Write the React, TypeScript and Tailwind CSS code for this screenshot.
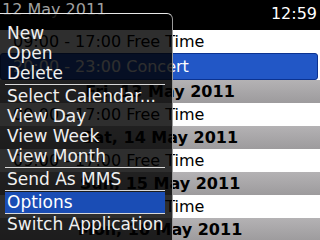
const menuGroups = [
  ['New', 'Open', 'Delete'],
  ['Select Calendar...', 'View Day', 'View Week', 'View Month'],
  ['Send As MMS'],
];

function DayHeader({ label }: { label: string }) {
  return (
    <div className="flex h-[23px] shrink-0 items-center justify-center bg-linear-to-b from-[#b4b2b4] to-[#9d9b9d] font-bold text-black">
      {label}
    </div>
  );
}

function FreeRow() {
  return (
    <div className="flex h-[23px] shrink-0 items-center bg-white pl-[13px] text-black">
      09:00 - 17:00 Free Time
    </div>
  );
}

function Separator({ className = '' }: { className?: string }) {
  return <div className={`mx-[5px] h-px w-[160px] bg-[#d8d8d8] ${className}`} />;
}

export default function App() {
  return (
    <div className="relative h-[240px] w-[320px] overflow-hidden bg-black font-['DejaVu_Sans',sans-serif] text-[16px] leading-[20px]">
      {/* calendar agenda */}
      <div className="flex h-full flex-col">
        <div className="flex h-[30px] shrink-0 items-start justify-between">
          <span className="pl-[2px] text-[#a0a0a0]">12 May 2011</span>
          <span className="pr-[3px] pt-[4px] text-white">12:59</span>
        </div>
        <FreeRow />
        <div className="flex h-[27px] shrink-0 bg-white pr-[2px]">
          <div className="flex h-full w-full items-center rounded-[3px] border border-[#0c3391] bg-[#2257c6] pl-[12px] text-white">
            20:00 - 23:00 Concert
          </div>
        </div>
        <DayHeader label="Fri, 13 May 2011" />
        <FreeRow />
        <DayHeader label="Sat, 14 May 2011" />
        <FreeRow />
        <DayHeader label="Sun, 15 May 2011" />
        <FreeRow />
        <DayHeader label="Mon, 16 May 2011" />
      </div>

      {/* menu */}
      <div className="absolute bottom-0 left-0 top-[13px] w-[173px] rounded-tr-[6px] border-r border-t border-r-[#9a9a9a] border-t-[#e8e8e8] bg-black/[0.82] pt-[9px] text-[17px] text-[#f0f0f0]">
        {menuGroups.map((group, gi) => (
          <div key={gi}>
            {gi > 0 && <Separator className="my-[1px]" />}
            {group.map((item) => (
              <div key={item} className="h-[20px] whitespace-nowrap pl-[7px]">
                {item}
              </div>
            ))}
          </div>
        ))}
        <Separator className="my-[1px]" />
        <div className="mx-[5px] h-[21px] w-[160px] bg-[#1a4db5] pl-[2px] leading-[21px] text-white">Options</div>
        <Separator />
        <div className="h-[20px] whitespace-nowrap pl-[7px]">Switch Application</div>
      </div>
    </div>
  );
}
